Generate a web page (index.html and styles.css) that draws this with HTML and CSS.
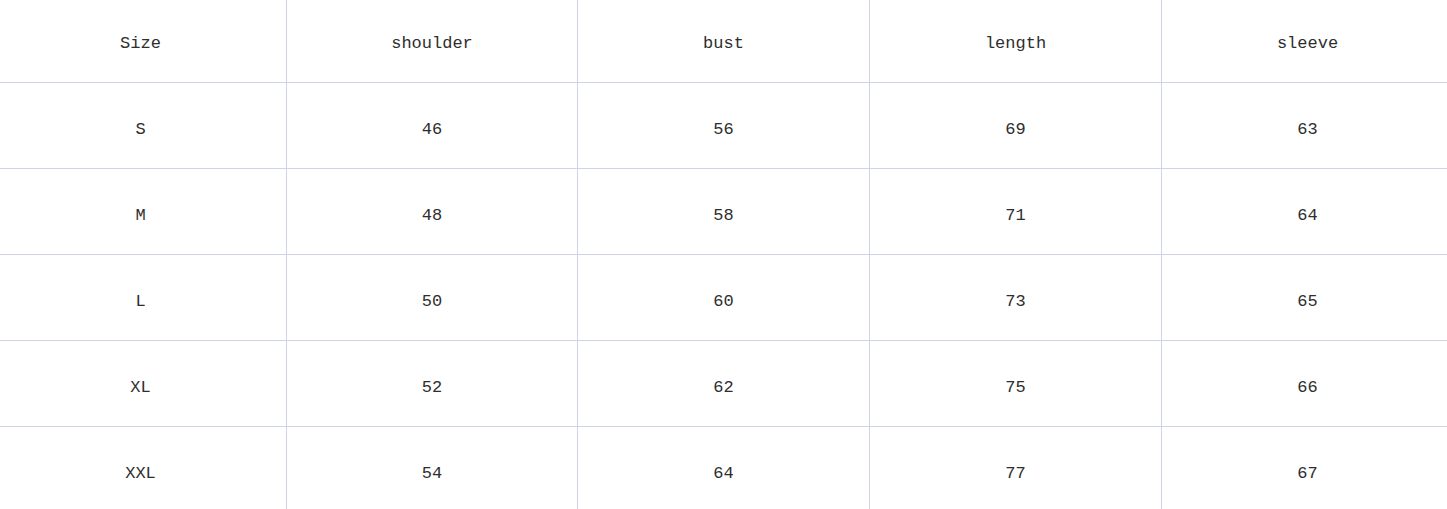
FILE: index.html
```html
<!DOCTYPE html>
<html>
<head>
<meta charset="utf-8">
<link rel="stylesheet" href="styles.css">
</head>
<body>
<div class="page">
  <div class="table">
    <div class="cell">Size</div><div class="cell">shoulder</div><div class="cell">bust</div><div class="cell">length</div><div class="cell">sleeve</div>
    <div class="cell">S</div><div class="cell">46</div><div class="cell">56</div><div class="cell">69</div><div class="cell">63</div>
    <div class="cell">M</div><div class="cell">48</div><div class="cell">58</div><div class="cell">71</div><div class="cell">64</div>
    <div class="cell">L</div><div class="cell">50</div><div class="cell">60</div><div class="cell">73</div><div class="cell">65</div>
    <div class="cell">XL</div><div class="cell">52</div><div class="cell">62</div><div class="cell">75</div><div class="cell">66</div>
    <div class="cell">XXL</div><div class="cell">54</div><div class="cell">64</div><div class="cell">77</div><div class="cell">67</div>
  </div>
</div>
</body>
</html>
```
FILE: styles.css
```css
html, body {
  margin: 0;
  padding: 0;
  background: #ffffff;
}
.page {
  width: 1447px;
  height: 509px;
  overflow: hidden;
}
.table {
  display: grid;
  grid-template-columns: 292px 291px 292px 292px 292px;
  grid-auto-rows: 86px;
  margin: -3px 0 0 -5px;
  font-family: "Liberation Mono", "DejaVu Sans Mono", monospace;
  font-size: 17px;
  color: #2e2e2e;
}
.cell {
  box-sizing: border-box;
  border-right: 1px solid #cfd3e6;
  border-bottom: 1px solid #cfd3e6;
  display: flex;
  align-items: center;
  justify-content: center;
  padding-top: 8px;
}
```
